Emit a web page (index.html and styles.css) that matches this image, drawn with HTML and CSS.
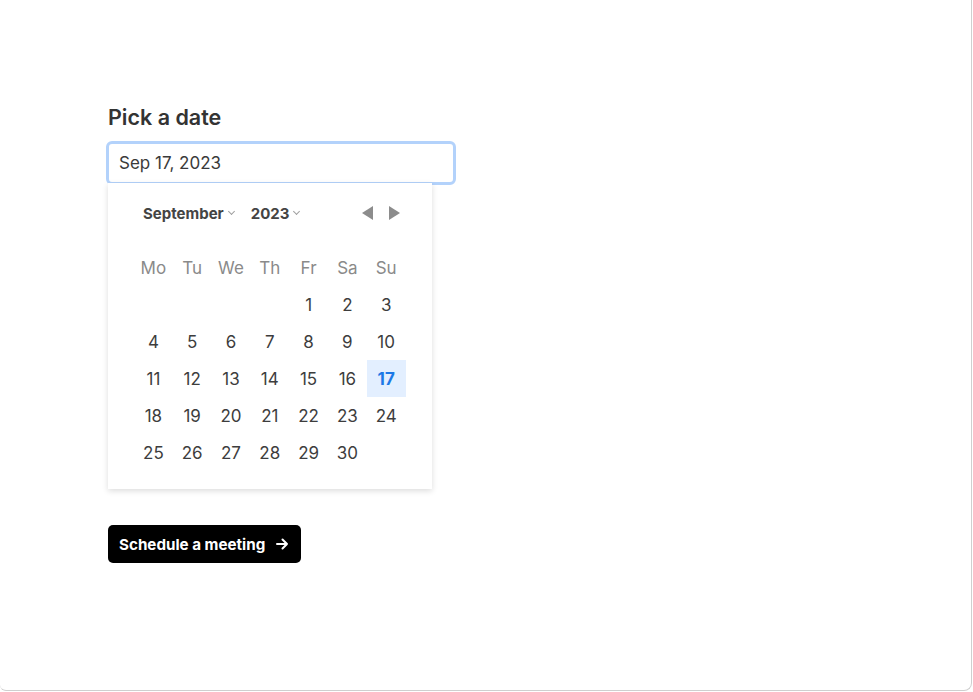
FILE: index.html
```html
<!DOCTYPE html>
<html lang="en">
<head>
    <meta charset="UTF-8">
    <meta name="viewport" content="width=device-width, initial-scale=1.0">
    <title>Pick a date</title>
    <link rel="stylesheet" href="styles.css">
</head>
<body>
    <div class="frame">
        <div class="field">
            <label class="field-label" for="date">Pick a date</label>
            <input class="date-input" id="date" type="text" value="Sep 17, 2023">

            <div class="calendar">
                <div class="calendar-header">
                    <span class="select">September <span class="chev"></span></span>
                    <span class="select">2023 <span class="chev"></span></span>
                    <div class="nav">
                        <span class="tri tri-left"></span>
                        <span class="tri tri-right"></span>
                    </div>
                </div>
                <div class="days">
                    <span class="wd">Mo</span>
                    <span class="wd">Tu</span>
                    <span class="wd">We</span>
                    <span class="wd">Th</span>
                    <span class="wd">Fr</span>
                    <span class="wd">Sa</span>
                    <span class="wd">Su</span>

                    <span></span><span></span><span></span><span></span>
                    <span>1</span><span>2</span><span>3</span>
                    <span>4</span><span>5</span><span>6</span><span>7</span><span>8</span><span>9</span><span>10</span>
                    <span>11</span><span>12</span><span>13</span><span>14</span><span>15</span><span>16</span><span class="selected">17</span>
                    <span>18</span><span>19</span><span>20</span><span>21</span><span>22</span><span>23</span><span>24</span>
                    <span>25</span><span>26</span><span>27</span><span>28</span><span>29</span><span>30</span>
                </div>
            </div>

            <button class="schedule-button">
                Schedule a meeting
                <svg width="14" height="14" viewBox="0 0 14 14" fill="none" stroke="currentColor" stroke-width="2" stroke-linecap="round" stroke-linejoin="round">
                    <path d="M2 7h10M7.5 2.5L12 7l-4.5 4.5"/>
                </svg>
            </button>
        </div>
    </div>
</body>
</html>
```

FILE: styles.css
```css
body {
    margin: 0;
    background-color: #fff;
    font-family: Inter, "Noto Sans", Arial, sans-serif;
    color: #3a3a3a;
}

.frame {
    box-sizing: border-box;
    width: 972px;
    height: 691px;
    border-right: 1px solid #cfcfcf;
    border-bottom: 1px solid #cfcfcf;
    border-bottom-right-radius: 8px;
    border-bottom-left-radius: 6px;
    padding: 103px 0 0 108px;
}

.field {
    display: flex;
    flex-direction: column;
    align-items: flex-start;
}

.field-label {
    font-size: 21.5px;
    line-height: 28px;
    font-weight: 600;
    color: #333;
    margin-bottom: 10px;
}

.date-input {
    box-sizing: border-box;
    width: 350px;
    height: 44px;
    margin-left: -2px;
    padding: 0 10px;
    border: 3px solid #b3d2fb;
    border-radius: 6px;
    font-family: inherit;
    font-size: 17px;
    color: #3a3a3a;
    outline: none;
}

.calendar {
    box-sizing: border-box;
    width: 324px;
    margin-top: -2px;
    padding: 16px 25px 18px 26px;
    background-color: #fff;
    box-shadow: 0 2px 6px rgba(0, 0, 0, 0.14);
}

.calendar-header {
    display: flex;
    align-items: center;
    height: 28px;
    padding: 0 7px 0 9px;
    margin-bottom: 22px;
}

.select {
    display: flex;
    align-items: center;
    gap: 5px;
    font-size: 15px;
    font-weight: 700;
    color: #444;
    margin-right: 17px;
}

.chev {
    width: 4px;
    height: 4px;
    border-right: 1px solid #a0a0a0;
    border-bottom: 1px solid #a0a0a0;
    transform: rotate(45deg);
    margin-top: -3px;
}

.nav {
    margin-left: auto;
    display: flex;
    gap: 16px;
}

.tri {
    width: 0;
    height: 0;
    border-top: 7px solid transparent;
    border-bottom: 7px solid transparent;
}

.tri-left {
    border-right: 11px solid #8c8c8c;
}

.tri-right {
    border-left: 11px solid #8c8c8c;
}

.days {
    display: grid;
    grid-template-columns: repeat(7, 38.8px);
    grid-auto-rows: 37px;
    font-size: 17px;
    color: #3d3d3d;
}

.days span {
    display: flex;
    align-items: center;
    justify-content: center;
}

.days .wd {
    color: #8a8a8a;
}

.days .selected {
    background-color: #e3efff;
    color: #1c78e6;
    font-weight: 700;
}

.schedule-button {
    display: flex;
    align-items: center;
    gap: 10px;
    margin-top: 36px;
    height: 38px;
    padding: 0 12px 0 11px;
    background-color: #000;
    color: #fff;
    border: none;
    border-radius: 5px;
    font-family: inherit;
    font-size: 15.2px;
    font-weight: 700;
    cursor: pointer;
}
```
